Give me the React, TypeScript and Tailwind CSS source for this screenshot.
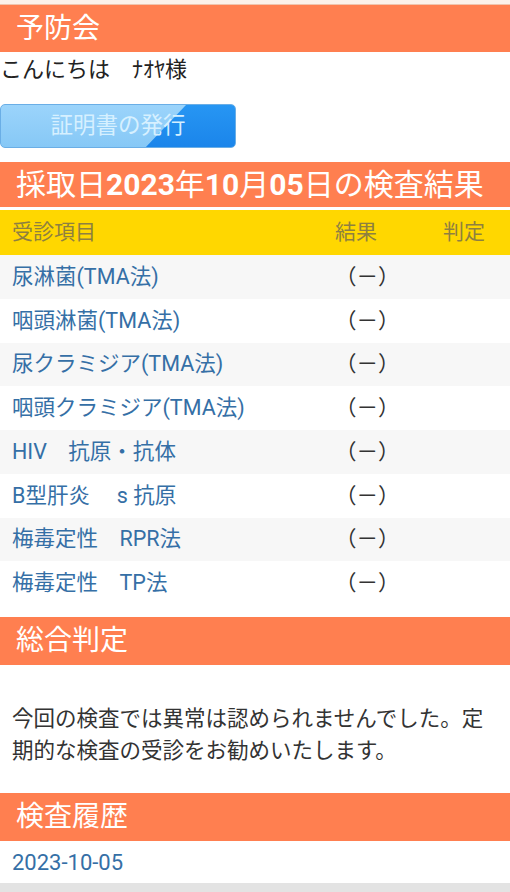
import React from 'react';

const FONT = { fontFamily: 'Roboto, "Noto Sans CJK JP", sans-serif' };

const ITEMS = [
  '尿淋菌(TMA法)',
  '咽頭淋菌(TMA法)',
  '尿クラミジア(TMA法)',
  '咽頭クラミジア(TMA法)',
  'HIV　抗原・抗体',
  'B型肝炎　 s 抗原',
  '梅毒定性　RPR法',
  '梅毒定性　TP法',
];

const SectionTitle = ({ children, className = '' }: { children: React.ReactNode; className?: string }) => (
  <div className={`bg-[#ff7f50] text-white flex items-center pl-4 text-[28px] ${className}`}>{children}</div>
);

const App = () => {
  return (
    <div className="w-[510px] h-[892px] overflow-hidden bg-white text-[#333]" style={FONT}>
      <div className="h-[5px] bg-[#fcf1ea] border-b border-[#f0c4ad]" />
      <SectionTitle className="h-[47px]">予防会</SectionTitle>

      <div className="h-[34px] flex items-center text-[22px] text-[#222]">こんにちは　ﾅｵﾔ様</div>

      <div className="pt-[18px] pb-[14px]">
        <button className="relative w-[236px] h-[44px] rounded-[5px] border border-[#6aaee6] overflow-hidden bg-gradient-to-b from-[#9bd4fb] to-[#86c8f6]">
          <svg className="absolute inset-0" width="236" height="44" viewBox="0 0 236 44" preserveAspectRatio="none">
            <defs>
              <linearGradient id="dk" x1="0" y1="0" x2="0" y2="1">
                <stop offset="0" stopColor="#2796f3" />
                <stop offset="1" stopColor="#1a84ea" />
              </linearGradient>
            </defs>
            <polygon points="185,0 236,0 236,44 143,44" fill="url(#dk)" />
          </svg>
          <span className="relative text-[22.5px] text-[#d6f0ff]">証明書の発行</span>
        </button>
      </div>

      <div className="bg-[#ff7f50] text-white h-[45px] flex items-center pl-4 text-[30px] whitespace-nowrap">
        採取日<b>2023</b>年<b>10</b>月<b>05</b>日の検査結果
      </div>

      <div className="mt-[3px]">
        <div className="grid grid-cols-[1fr_108px_67px] h-[45px] items-center bg-[#ffd700] text-[#8e8040] text-[21px]">
          <span className="pl-3">受診項目</span>
          <span>結果</span>
          <span>判定</span>
        </div>
        {ITEMS.map((item, i) => (
          <div
            key={item}
            className={`grid grid-cols-[1fr_108px_67px] h-[43.75px] items-center text-[21.5px] ${i % 2 === 0 ? 'bg-[#f7f7f7]' : 'bg-white'}`}
          >
            <span className="pl-3 text-[#356fa6] whitespace-nowrap">{item}</span>
            <span className="text-[#333]">（－）</span>
            <span />
          </div>
        ))}
      </div>

      <SectionTitle className="h-[48px] mt-[12px]">総合判定</SectionTitle>
      <p className="px-3 pt-[38px] pb-[26px] text-[21.5px] leading-[32px] text-[#333]">
        今回の検査では異常は認められませんでした。定期的な検査の受診をお勧めいたします。
      </p>

      <SectionTitle className="h-[48px]">検査履歴</SectionTitle>
      <div className="h-[42px] flex items-center pl-3 text-[22px] text-[#356fa6]">2023-10-05</div>
      <div className="h-[20px] bg-[#e3e3e3]" />
    </div>
  );
};

export default App;
